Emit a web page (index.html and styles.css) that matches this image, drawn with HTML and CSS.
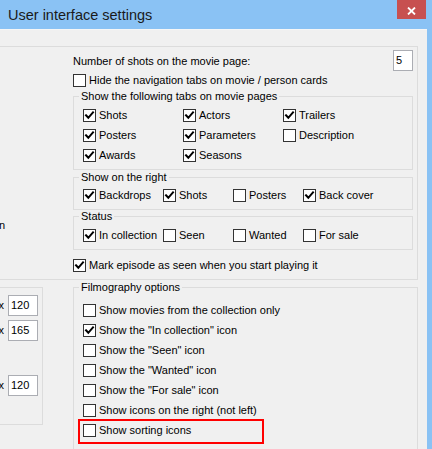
FILE: index.html
```html
<!DOCTYPE html>
<html lang="en">
<head>
<meta charset="utf-8">
<title>User interface settings</title>
<link rel="stylesheet" href="styles.css">
</head>
<body>
<div class="window">
  <div class="titlebar">
    <span class="title">User interface settings</span>
    <div class="close"><svg class="close-x" viewBox="0 0 9 8" width="9" height="8"><path d="M1,0.5 L8,7.5 M8,0.5 L1,7.5"/></svg></div>
  </div>
  <div class="client">
    <div class="pane">
      <div class="pane-left"><div class="cut-label">n</div></div>
      <div class="pane-right">
        <div class="shots">
          <span class="shots-label">Number of shots on the movie page:</span>
          <span class="field field-narrow">5</span>
        </div>
        <label class="check check-tight"><span class="box"></span>Hide the navigation tabs on movie / person cards</label>

        <fieldset class="group group-tabs">
          <legend>Show the following tabs on movie pages</legend>
          <div class="cols3">
            <label class="check"><span class="box"><svg viewBox="0 0 11 11"><polyline points="2,5.3 4.3,7.8 9,2.4"/></svg></span>Shots</label>
            <label class="check"><span class="box"><svg viewBox="0 0 11 11"><polyline points="2,5.3 4.3,7.8 9,2.4"/></svg></span>Actors</label>
            <label class="check"><span class="box"><svg viewBox="0 0 11 11"><polyline points="2,5.3 4.3,7.8 9,2.4"/></svg></span>Trailers</label>
            <label class="check"><span class="box"><svg viewBox="0 0 11 11"><polyline points="2,5.3 4.3,7.8 9,2.4"/></svg></span>Posters</label>
            <label class="check"><span class="box"><svg viewBox="0 0 11 11"><polyline points="2,5.3 4.3,7.8 9,2.4"/></svg></span>Parameters</label>
            <label class="check"><span class="box"></span>Description</label>
            <label class="check"><span class="box"><svg viewBox="0 0 11 11"><polyline points="2,5.3 4.3,7.8 9,2.4"/></svg></span>Awards</label>
            <label class="check"><span class="box"><svg viewBox="0 0 11 11"><polyline points="2,5.3 4.3,7.8 9,2.4"/></svg></span>Seasons</label>
          </div>
        </fieldset>

        <fieldset class="group group-right">
          <legend>Show on the right</legend>
          <div class="cols4">
            <label class="check"><span class="box"><svg viewBox="0 0 11 11"><polyline points="2,5.3 4.3,7.8 9,2.4"/></svg></span>Backdrops</label>
            <label class="check"><span class="box"><svg viewBox="0 0 11 11"><polyline points="2,5.3 4.3,7.8 9,2.4"/></svg></span>Shots</label>
            <label class="check"><span class="box"></span>Posters</label>
            <label class="check"><span class="box"><svg viewBox="0 0 11 11"><polyline points="2,5.3 4.3,7.8 9,2.4"/></svg></span>Back cover</label>
          </div>
        </fieldset>

        <fieldset class="group group-status">
          <legend>Status</legend>
          <div class="cols4">
            <label class="check"><span class="box"><svg viewBox="0 0 11 11"><polyline points="2,5.3 4.3,7.8 9,2.4"/></svg></span>In collection</label>
            <label class="check"><span class="box"></span>Seen</label>
            <label class="check"><span class="box"></span>Wanted</label>
            <label class="check"><span class="box"></span>For sale</label>
          </div>
        </fieldset>

        <label class="check check-mark"><span class="box"><svg viewBox="0 0 11 11"><polyline points="2,5.3 4.3,7.8 9,2.4"/></svg></span>Mark episode as seen when you start playing it</label>
      </div>
    </div>

    <div class="lower">
      <div class="size-group">
        <div class="lrow"><span class="lrow-label">x</span><span class="field field-wide">120</span></div>
        <div class="lrow lrow-2"><span class="lrow-label">x</span><span class="field field-wide">165</span></div>
        <div class="lrow lrow-3"><span class="lrow-label">x</span><span class="field field-wide">120</span></div>
      </div>

      <fieldset class="group group-film">
        <legend>Filmography options</legend>
        <label class="check"><span class="box"></span>Show movies from the collection only</label>
        <label class="check"><span class="box"><svg viewBox="0 0 11 11"><polyline points="2,5.3 4.3,7.8 9,2.4"/></svg></span>Show the "In collection" icon</label>
        <label class="check"><span class="box"></span>Show the "Seen" icon</label>
        <label class="check"><span class="box"></span>Show the "Wanted" icon</label>
        <label class="check"><span class="box"></span>Show the "For sale" icon</label>
        <label class="check"><span class="box"></span>Show icons on the right (not left)</label>
        <label class="check check-highlight"><span class="box"></span>Show sorting icons</label>
      </fieldset>
    </div>
  </div>
</div>
</body>
</html>
```

FILE: styles.css
```css
* { box-sizing: border-box; }

html, body {
  margin: 0;
  padding: 0;
}

body {
  width: 432px;
  height: 449px;
  overflow: hidden;
  font-family: "Liberation Sans", Arial, sans-serif;
  font-size: 11px;
  color: #000;
  background: #8ac2f4;
}

.window {
  width: 432px;
  height: 449px;
  background: #8ac2f4;
  display: flex;
  flex-direction: column;
}

.titlebar {
  height: 29px;
  flex: none;
  display: flex;
  align-items: flex-start;
  justify-content: space-between;
  padding-left: 8px;
  padding-right: 6px;
}

.title {
  font-size: 14.5px;
  line-height: 29px;
  padding-top: 1px;
  color: #1a1a1a;
  white-space: nowrap;
}

.close {
  width: 29px;
  height: 19px;
  background: #c75050;
  display: flex;
  justify-content: center;
  align-items: flex-start;
  padding-top: 7px;
}

.close-x {
  display: block;
}

.close-x path {
  fill: none;
  stroke: #fff;
  stroke-width: 1.8;
}

.client {
  width: 427px;
  flex: 1;
  min-height: 0;
  background: #f0f0f0;
  border-top: 1px solid #f6f6f6;
  overflow: hidden;
}

/* top pane */
.pane {
  margin: 16px 0 0 -20px;
  width: 438px;
  height: 234px;
  border: 1px solid #dcdcdc;
  display: flex;
}

.pane-left {
  width: 92px;
  flex: none;
  padding-top: 172px;
  padding-right: 68px;
  text-align: right;
  white-space: nowrap;
}

.cut-label {
  line-height: 13px;
}

.pane-right {
  width: 340px;
  flex: none;
  padding-top: 3px;
}

.shots {
  display: flex;
  justify-content: space-between;
  height: 21px;
}

.shots-label {
  padding-top: 5px;
  line-height: 13px;
  white-space: nowrap;
}

.field {
  display: block;
  height: 21px;
  background: #fff;
  border: 1px solid #abadb3;
  padding-left: 2px;
  line-height: 19px;
  white-space: nowrap;
}

.field-narrow { width: 20px; }
.field-wide { width: 30px; flex: none; }

/* checkboxes */
.check {
  display: flex;
  align-items: center;
  gap: 3px;
  height: 20px;
  line-height: 13px;
  white-space: nowrap;
}

.check-tight {
  height: 13px;
  margin-top: 3px;
}

.check-mark {
  margin-top: 5px;
}

.box {
  width: 13px;
  height: 13px;
  flex: none;
  border: 1px solid #333;
  background: #fff;
}

.box svg {
  display: block;
  width: 11px;
  height: 11px;
}

.box polyline {
  fill: none;
  stroke: #000;
  stroke-width: 2;
  stroke-linecap: square;
  stroke-linejoin: miter;
}

/* group boxes */
.group {
  margin: 0;
  min-width: 0;
  border: 1px solid #dcdcdc;
  padding: 2px 0 4px 9px;
}

.group legend {
  padding: 0 2px;
  margin-left: -4px;
  height: 13px;
  line-height: 13px;
  white-space: nowrap;
}

.group-tabs { margin-top: 3px; }
.group-right { margin-top: 1px; padding-top: 1px; }
.group-status { margin-top: 0; }

.cols3 {
  display: grid;
  grid-template-columns: 100px 100px 1fr;
}

.cols4 {
  display: grid;
  grid-template-columns: 80px 70px 70px 1fr;
}

/* lower area */
.lower {
  display: flex;
  align-items: flex-start;
  margin-top: 1px;
}

.size-group {
  margin-top: 6px;
  margin-left: -20px;
  width: 63px;
  height: 138px;
  flex: none;
  border: 1px solid #dcdcdc;
  padding: 7px 4px 0 0;
}

.lrow {
  display: flex;
  gap: 4px;
  height: 21px;
}

.lrow-2 { margin-top: 4px; }
.lrow-3 { margin-top: 34px; }

.lrow-label {
  flex: 1;
  text-align: right;
  line-height: 21px;
}

.group-film {
  margin-left: 30px;
  width: 345px;
  flex: none;
  padding-top: 6px;
  padding-bottom: 24px;
}

.check-highlight {
  position: relative;
}

.check-highlight::after {
  content: "";
  position: absolute;
  left: -5px;
  top: -1px;
  width: 182px;
  height: 21px;
  border: 2px solid #ff0000;
}
```
